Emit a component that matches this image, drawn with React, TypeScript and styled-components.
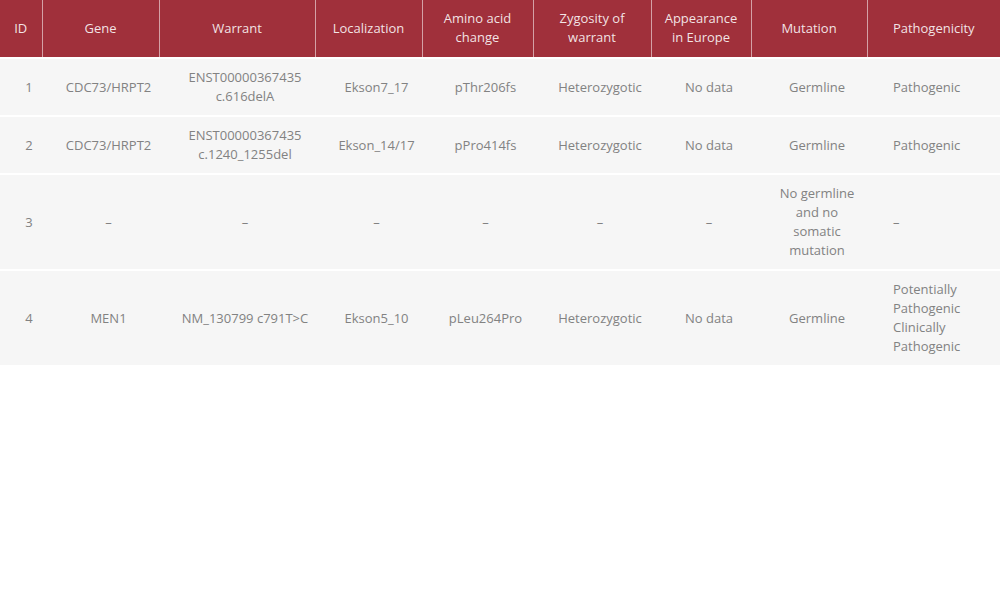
import React from "react";
import styled, { createGlobalStyle } from "styled-components";

const GlobalStyle = createGlobalStyle`
  html, body { margin: 0; padding: 0; background: #ffffff; }
  body { font-family: "Open Sans", "DejaVu Sans", sans-serif; }
`;

const Table = styled.table`
  width: 1000px;
  table-layout: fixed;
  border-collapse: collapse;
  font-size: 13px;
  line-height: 19px;
`;

const HeadCell = styled.th`
  background: #a0303b;
  color: rgba(255, 255, 255, 0.88);
  font-weight: 400;
  text-align: center;
  vertical-align: middle;
  padding: 9px 6px 10px;
  border-left: 1px solid rgba(255, 255, 255, 0.55);
  &:first-child { border-left: none; }
`;

const Row = styled.tr`
  border-top: 2px solid #ffffff;
`;

const Cell = styled.td<{ $left?: boolean }>`
  background: #f6f6f6;
  color: #828282;
  text-align: ${(p) => (p.$left ? "left" : "center")};
  vertical-align: middle;
  padding: ${(p) => (p.$left ? "9px 6px 9px 26px" : "9px 4px 9px 20px")};
`;

const widths = [42, 117, 156, 107, 111, 118, 100, 116, 133];
const headers = [
  "ID",
  "Gene",
  "Warrant",
  "Localization",
  "Amino acid change",
  "Zygosity of warrant",
  "Appearance in Europe",
  "Mutation",
  "Pathogenicity",
];

const rows: React.ReactNode[][] = [
  [
    "1",
    "CDC73/HRPT2",
    <>ENST00000367435<br />c.616delA</>,
    "Ekson7_17",
    "pThr206fs",
    "Heterozygotic",
    "No data",
    "Germline",
    "Pathogenic",
  ],
  [
    "2",
    "CDC73/HRPT2",
    <>ENST00000367435<br />c.1240_1255del</>,
    "Ekson_14/17",
    "pPro414fs",
    "Heterozygotic",
    "No data",
    "Germline",
    "Pathogenic",
  ],
  [
    "3",
    "–",
    "–",
    "–",
    "–",
    "–",
    "–",
    <>No germline<br />and no<br />somatic<br />mutation</>,
    "–",
  ],
  [
    "4",
    "MEN1",
    "NM_130799 c791T>C",
    "Ekson5_10",
    "pLeu264Pro",
    "Heterozygotic",
    "No data",
    "Germline",
    <>Potentially<br />Pathogenic<br />Clinically<br />Pathogenic</>,
  ],
];

export default function App() {
  return (
    <>
      <GlobalStyle />
      <Table>
        <colgroup>
          {widths.map((w, i) => (
            <col key={i} style={{ width: w }} />
          ))}
        </colgroup>
        <thead>
          <tr>
            {headers.map((h) => (
              <HeadCell key={h}>{h}</HeadCell>
            ))}
          </tr>
        </thead>
        <tbody>
          {rows.map((r, i) => (
            <Row key={i}>
              {r.map((c, j) => (
                <Cell key={j} $left={j === 8}>
                  {c}
                </Cell>
              ))}
            </Row>
          ))}
        </tbody>
      </Table>
    </>
  );
}
